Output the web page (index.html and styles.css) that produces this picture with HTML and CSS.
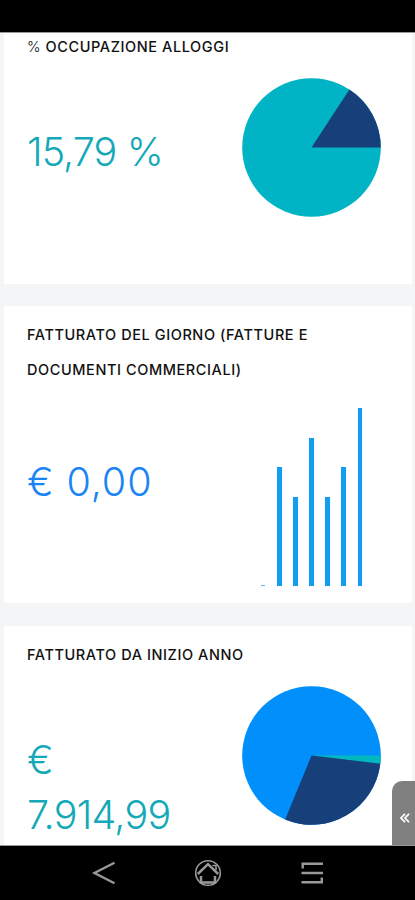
FILE: index.html
```
<!DOCTYPE html>
<html lang="it">
<head>
    <meta charset="UTF-8">
    <meta name="viewport" content="width=device-width, initial-scale=1.0">
    <title>Dashboard</title>
    <link rel="stylesheet" href="styles.css">
</head>
<body>
    <div class="status-bar"></div>

    <main class="dashboard">
        <section class="card card-rooms">
            <h2><span class="percent">%</span> OCCUPAZIONE ALLOGGI</h2>
            <div class="card-body">
                <p class="value teal value-percent">15,79 %</p>
                <svg class="pie pie-rooms" viewBox="-69.5 -69.5 139 139">
                    <circle r="69.3" fill="#00b4c5"/>
                    <path d="M0 0H69.3A69.3 69.3 0 0 0 37.9 -58Z" fill="#173f7a"/>
                </svg>
            </div>
        </section>

        <section class="card card-day">
            <h2>FATTURATO DEL GIORNO (FATTURE E<br>DOCUMENTI COMMERCIALI)</h2>
            <div class="card-body">
                <p class="value blue value-day">€ 0,00</p>
                <div class="bars">
                    <span class="empty"></span>
                    <span style="height: 119px"></span>
                    <span style="height: 89px"></span>
                    <span style="height: 148px"></span>
                    <span style="height: 89px"></span>
                    <span style="height: 119px"></span>
                    <span style="height: 178px"></span>
                </div>
            </div>
        </section>

        <section class="card card-year">
            <h2>FATTURATO DA INIZIO ANNO</h2>
            <div class="card-body">
                <p class="value teal value-year">€<br>7.914,99</p>
                <svg class="pie" viewBox="-69.5 -69.5 139 139">
                    <circle r="69.3" fill="#008ffb"/>
                    <path d="M0 0H69.3A69.3 69.3 0 0 1 68.8 8.3Z" fill="#00b8bd"/>
                    <path d="M0 0L68.8 8.3A69.3 69.3 0 0 1 -26.3 64.1Z" fill="#173f7a"/>
                </svg>
            </div>
        </section>

        <button class="drawer">
            <svg width="10" height="10" viewBox="0 0 10 10">
                <path d="M5 .8L1 5L5 9.2M9 .8L5 5L9 9.2"/>
            </svg>
        </button>
    </main>

    <nav class="nav-bar">
        <svg width="28" height="28" viewBox="0 0 28 28">
            <path d="M24.5 3.8L4.5 14L24.5 24.2"/>
        </svg>
        <svg width="28" height="28" viewBox="0 0 28 28">
            <circle cx="14" cy="14" r="12.3" stroke-width="1.6"/>
            <path d="M3.8 15L14 5.2L24.2 15M7 17V23.5H21V17" stroke-width="2.5"/>
            <path d="M18.5 6.5H22V11" stroke-width="1.6"/>
        </svg>
        <svg width="28" height="28" viewBox="0 0 28 28">
            <path d="M25 4.7H4.7V9.5M3.5 14H25M3.5 23.3H23.8V18.5"/>
        </svg>
    </nav>
</body>
</html>
```
FILE: styles.css
```
* {
    box-sizing: border-box;
}
body {
    font-family: Inter, Roboto, sans-serif;
    margin: 0;
    height: 900px;
    display: flex;
    flex-direction: column;
    overflow: hidden;
    background-color: #000;
}
.status-bar {
    height: 32px;
    flex: none;
}
.dashboard {
    position: relative;
    height: 814px;
    flex: none;
    padding: 0 3px 0 4px;
    overflow: hidden;
    background-color: #f4f5f7;
    border-top: 1px solid #999;
    border-bottom: 1px solid #999;
}
.card {
    padding: 12px 31px 0 23px;
    margin-bottom: 22px;
    background-color: #fff;
}
.card-rooms {
    height: 266px;
    margin-top: -15px;
}
.card-day {
    height: 297px;
    margin-bottom: 23px;
}
.card-year {
    height: 260px;
}
.card h2 {
    margin: 0;
    font-size: 14.5px;
    line-height: 34.5px;
    font-weight: 500;
    letter-spacing: 0.58px;
    white-space: nowrap;
    color: #111;
}
.card h2 .percent {
    font-weight: 300;
}
.card-body {
    display: flex;
    justify-content: space-between;
    align-items: flex-start;
}
.value {
    margin: 0;
    font-size: 39.5px;
    line-height: 55px;
    font-weight: 300;
    white-space: nowrap;
}
.teal {
    color: #14a9b8;
}
.blue {
    color: #1b84f5;
}
.value-percent {
    margin-top: 60px;
    letter-spacing: -0.9px;
}
.value-day {
    margin-top: 68px;
    letter-spacing: 0.9px;
}
.value-year {
    margin-top: 60px;
    letter-spacing: -0.7px;
}
.pie {
    width: 139px;
    height: 139px;
    margin-top: 13px;
}
.bars {
    display: flex;
    align-items: flex-end;
    gap: 11.6px;
    height: 178px;
    margin: 21px 19px 0 0;
}
.bars span {
    width: 4.5px;
    background-color: #139df2;
}
.bars .empty {
    height: 1px;
    opacity: 0.7;
}
.drawer {
    position: absolute;
    right: 0;
    bottom: 0;
    width: 23px;
    height: 64px;
    padding: 9px 0 0 2px;
    border: none;
    border-radius: 10px 0 0 0;
    background-color: #808080;
}
.drawer svg {
    display: block;
    margin: auto;
    fill: none;
    stroke: #fff;
    stroke-width: 1.7;
}
.nav-bar {
    flex: 1;
    display: flex;
    justify-content: center;
    align-items: center;
    gap: 76px;
}
.nav-bar svg {
    fill: none;
    stroke: #999;
    stroke-width: 2.4;
}
```
